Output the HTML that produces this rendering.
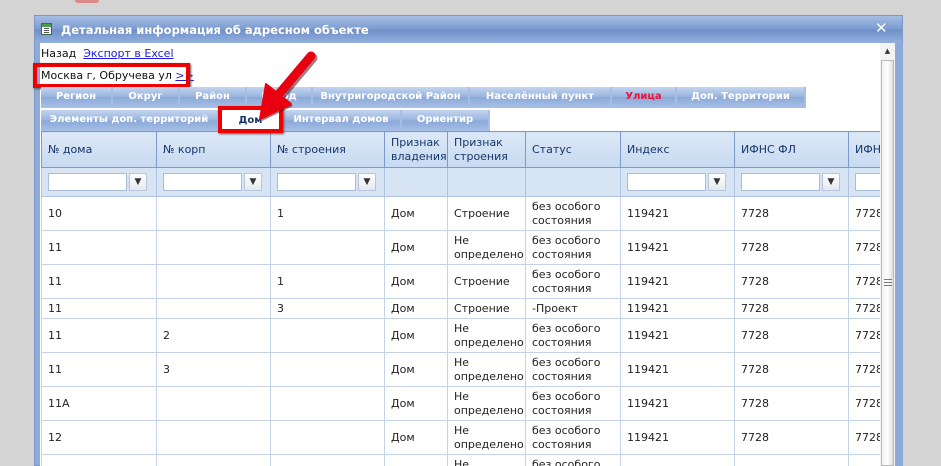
<!DOCTYPE html>
<html><head><meta charset="utf-8"><style>
*{box-sizing:border-box;margin:0;padding:0}
html,body{width:941px;height:466px;overflow:hidden}
body{background:#d4d4d4;font-family:Tahoma,"DejaVu Sans","Liberation Sans",sans-serif;font-size:11px;position:relative}
.abs{position:absolute}
#win{left:34px;top:15px;width:869px;height:451px;background:#8eaadb;border:1px solid #7c98c8}
#title{left:35px;top:16px;width:867px;height:27px;background:linear-gradient(#a6bde3,#7b9ad0 50%,#6f8fc8 51%,#93b0de);color:#fff;font-weight:bold;font-size:11.5px}
#content{left:40px;top:43px;width:841px;height:423px;background:#fff}
.tab{position:absolute;height:20px;background:linear-gradient(#c4d5ee,#98b3de 50%,#8aa8d8 51%,#a7bfe6);color:#fff;font-weight:bold;text-align:center;line-height:20px;border-right:2px solid #a8bfe3;font-size:10px;white-space:nowrap;overflow:hidden}
#clip{left:41px;top:131px;width:839px;height:335px;overflow:hidden}
table{position:absolute;left:0;top:0;border-collapse:collapse;table-layout:fixed;width:860px}
td{border:1px solid #c5d3e8;padding:0 6px;color:#222;vertical-align:middle;overflow:hidden;white-space:nowrap;line-height:14px}
th{border:1px solid #7c9acb;background:linear-gradient(#dce8f6,#c7daf1);font-weight:normal;text-align:left;padding:0 6px;color:#15366a;height:36px;line-height:14px}
tr.f td{background:#d7e4f4;height:29px;border-color:#aec3e2}
.in{display:inline-block;width:79px;height:18px;border:1px solid #a9bcd8;background:#fff;vertical-align:middle}
.fb{display:inline-block;width:18px;height:18px;border:1px solid #b8c6da;background:linear-gradient(#fff,#e4e9f0);vertical-align:middle;margin-left:2px;text-align:center;line-height:16px;font-size:9px;color:#333}
</style></head><body>
<div class="abs" style="left:75px;top:0;width:24px;height:3px;background:#d88;border-radius:0 0 8px 8px"></div>
<div id="win" class="abs"></div>
<div id="title" class="abs">
 <div class="abs" style="left:6px;top:7px;width:11px;height:12px;background:#fff;border:1px solid #3a6b3a"><div style="height:3px;background:#4a9a4a"></div><div style="margin:1px 2px;height:1px;background:#555"></div><div style="margin:1px 2px;height:1px;background:#555"></div><div style="margin:1px 2px;height:1px;background:#555"></div></div>
 <div class="abs" style="left:26px;top:7px">Детальная информация об адресном объекте</div>
 <div class="abs" style="left:840px;top:3px;font-size:15px">✕</div>
</div>
<div id="content" class="abs"></div>
<div class="abs" style="left:880px;top:43px;width:15px;height:423px;background:#f4f4f4"><div style="text-align:center;font-size:7px;color:#333;margin-top:4px">▲</div></div>
<div class="abs" style="left:41px;top:47px;color:#111">Назад &nbsp;<span style="color:#1a1ae0;text-decoration:underline">Экспорт в Excel</span></div>
<div class="abs" style="left:41px;top:69px;color:#111">Москва г, Обручева ул <span style="color:#1a1ae0;text-decoration:underline">&gt;&gt;</span></div>
<div class="abs" style="left:33px;top:63px;width:157px;height:25px;border:4px solid #e00;box-shadow:1px 1px 2px #555"></div>
<div class="abs" style="left:41px;top:87px;width:765px;height:21px;background:#a7bfe6"></div>
<div class="tab" style="left:41px;top:87px;width:72px">Регион</div>
<div class="tab" style="left:113px;top:87px;width:67px">Округ</div>
<div class="tab" style="left:180px;top:87px;width:67px">Район</div>
<div class="tab" style="left:247px;top:87px;width:66px">Город</div>
<div class="tab" style="left:313px;top:87px;width:157px">Внутригородской Район</div>
<div class="tab" style="left:470px;top:87px;width:142px">Населённый пункт</div>
<div class="tab" style="left:612px;top:87px;width:65px;color:#e8143c">Улица</div>
<div class="tab" style="left:677px;top:87px;width:129px">Доп. Территории</div>
<div class="tab" style="left:41px;top:110px;width:178px;height:21px">Элементы доп. территорий</div>
<div class="abs" style="left:219px;top:110px;width:63px;height:21px;background:#fff;color:#15366a;text-align:center;line-height:21px;font-weight:bold;font-size:10px">Дом</div>
<div class="tab" style="left:282px;top:110px;width:120px;height:21px">Интервал домов</div>
<div class="tab" style="left:402px;top:110px;width:88px;height:21px">Ориентир</div>
<div id="clip" class="abs">
<table>
<colgroup><col style="width:115px"><col style="width:114px"><col style="width:114px"><col style="width:63px"><col style="width:78px"><col style="width:95px"><col style="width:114px"><col style="width:114px"><col style="width:53px"></colgroup>
<tr><th>№ дома</th><th>№ корп</th><th>№ строения</th><th>Признак владения</th><th>Признак строения</th><th>Статус</th><th>Индекс</th><th>ИФНС ФЛ</th><th>ИФН</th></tr>
<tr class="f"><td><span class="in"></span><span class="fb">▼</span></td><td><span class="in"></span><span class="fb">▼</span></td><td><span class="in"></span><span class="fb">▼</span></td><td></td><td></td><td></td><td><span class="in"></span><span class="fb">▼</span></td><td><span class="in"></span><span class="fb">▼</span></td><td><span class="in"></span></td></tr>
<tr style="height:34px"><td>10</td><td></td><td>1</td><td>Дом</td><td>Строение</td><td>без особого<br>состояния</td><td>119421</td><td>7728</td><td>7728</td></tr>
<tr style="height:34px"><td>11</td><td></td><td></td><td>Дом</td><td>Не<br>определено</td><td>без особого<br>состояния</td><td>119421</td><td>7728</td><td>7728</td></tr>
<tr style="height:34px"><td>11</td><td></td><td>1</td><td>Дом</td><td>Строение</td><td>без особого<br>состояния</td><td>119421</td><td>7728</td><td>7728</td></tr>
<tr style="height:20px"><td>11</td><td></td><td>3</td><td>Дом</td><td>Строение</td><td>-Проект</td><td>119421</td><td>7728</td><td>7728</td></tr>
<tr style="height:34px"><td>11</td><td>2</td><td></td><td>Дом</td><td>Не<br>определено</td><td>без особого<br>состояния</td><td>119421</td><td>7728</td><td>7728</td></tr>
<tr style="height:34px"><td>11</td><td>3</td><td></td><td>Дом</td><td>Не<br>определено</td><td>без особого<br>состояния</td><td>119421</td><td>7728</td><td>7728</td></tr>
<tr style="height:34px"><td>11А</td><td></td><td></td><td>Дом</td><td>Не<br>определено</td><td>без особого<br>состояния</td><td>119421</td><td>7728</td><td>7728</td></tr>
<tr style="height:34px"><td>12</td><td></td><td></td><td>Дом</td><td>Не<br>определено</td><td>без особого<br>состояния</td><td>119421</td><td>7728</td><td>7728</td></tr>
<tr style="height:34px"><td></td><td></td><td></td><td></td><td>Не<br>определено</td><td>без особого<br>состояния</td><td></td><td></td><td></td></tr>
</table>
</div>
<div class="abs" style="left:881px;top:60px;width:13px;height:406px;background:linear-gradient(90deg,#f0f0f0,#fff,#dcdcdc);border:1px solid #b8b8b8"></div>
<div class="abs" style="left:884px;top:279px;width:8px;height:7px;border-top:1px solid #777;border-bottom:1px solid #777"><div style="margin-top:2px;border-top:1px solid #777"></div></div>
<div class="abs" style="left:895px;top:43px;width:8px;height:423px;background:#8eaadb"></div>
<div class="abs" style="left:218px;top:106px;width:65px;height:27px;border:4px solid #e00;box-shadow:1px 1px 2px #555"></div>
<svg class="abs" style="left:0;top:0" width="941" height="466">
<g transform="translate(2,2)" fill="#400" opacity="0.5"><line x1="311" y1="56" x2="279" y2="94" stroke="#400" stroke-width="9" stroke-linecap="round"/><polygon points="260,119 291,104 266,84"/></g>
<line x1="311" y1="56" x2="279" y2="94" stroke="#e80010" stroke-width="9" stroke-linecap="round"/>
<polygon points="260,119 291,104 266,84" fill="#e80010" stroke="#e80010" stroke-width="2" stroke-linejoin="round"/>
</svg>
</body></html>
